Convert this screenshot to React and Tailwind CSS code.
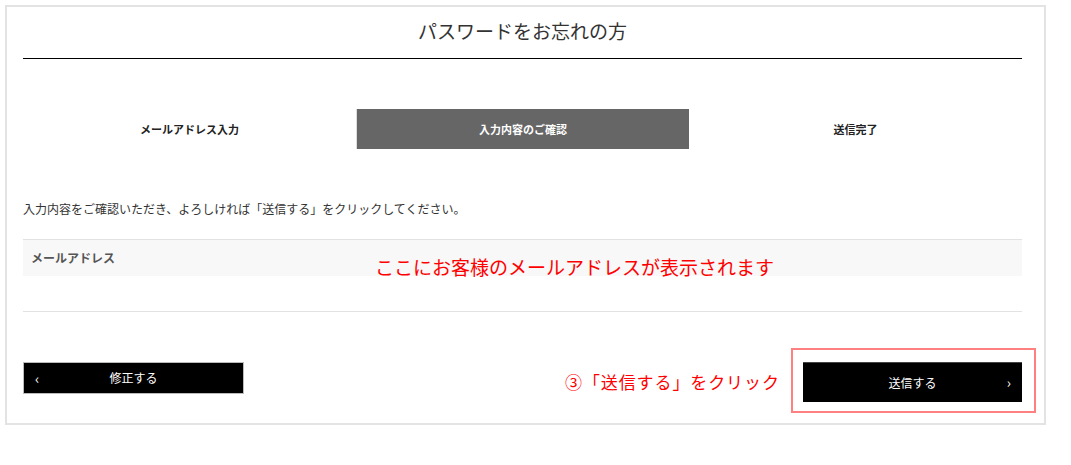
const jp = '"Noto Sans CJK JP", "Noto Sans", sans-serif'

const steps = ['メールアドレス入力', '入力内容のご確認', '送信完了']

export default function App() {
  return (
    <div className="h-[465px] w-[1071px] bg-white pl-[5px] pt-[5px] text-[#333]" style={{ fontFamily: jp }}>
      <div className="relative h-[420px] w-[1041px] border-2 border-[#e3e3e3] pl-4">
        <div className="w-[999px]">
          <h1 className="flex h-[52px] items-center justify-center border-b border-black pb-[3px] text-[19px] font-normal text-[#333]">
            パスワードをお忘れの方
          </h1>

          <div className="mt-[50px] grid h-[40px] grid-cols-3">
            {steps.map((s, i) => (
              <div key={s}
                className={`flex items-center justify-center text-[11px] font-bold ${i === 1 ? 'border-l border-[#ddd] bg-[#666] text-white' : 'text-[#222]'}`}>
                {s}
              </div>
            ))}
          </div>

          <p className="mt-[51px] text-[12px] leading-[18px] text-[#333]">
            入力内容をご確認いただき、よろしければ「送信する」をクリックしてください。
          </p>

          <div className="mt-[21px] border-y border-[#e2e2e2]">
            <div className="flex h-[36px] items-center bg-[#f8f8f8] px-2 text-[12px] font-bold text-[#555]">メールアドレス</div>
            <div className="h-[35px]"></div>
          </div>

          <div className="mt-[50px] flex items-start justify-between">
            <button className="relative flex h-[32px] w-[221px] items-center justify-center border border-[#bbb] bg-black text-[12px] text-white">
              <span className="absolute left-[11px] text-[14px]">‹</span>
              修正する
            </button>
            <button className="relative flex h-[40px] w-[219px] items-center justify-center border-t border-[#444] bg-black text-[12px] text-white">
              送信する
              <span className="absolute right-[11px] text-[14px]">›</span>
            </button>
          </div>
        </div>

        {/* annotations */}
        <p className="absolute left-[368px] top-[247px] text-[19px] leading-[26px] tracking-[0px] text-[#ff0000]">
          ここにお客様のメールアドレスが表示されます
        </p>
        <p className="absolute left-[558px] top-[363px] text-[17px] leading-[24px] tracking-[0.9px] text-[#ff0000]">
          ③「送信する」をクリック
        </p>
        <div className="absolute left-[784px] top-[341px] h-[65px] w-[245px] border-2 border-[#ff8080]"></div>
      </div>
    </div>
  )
}
